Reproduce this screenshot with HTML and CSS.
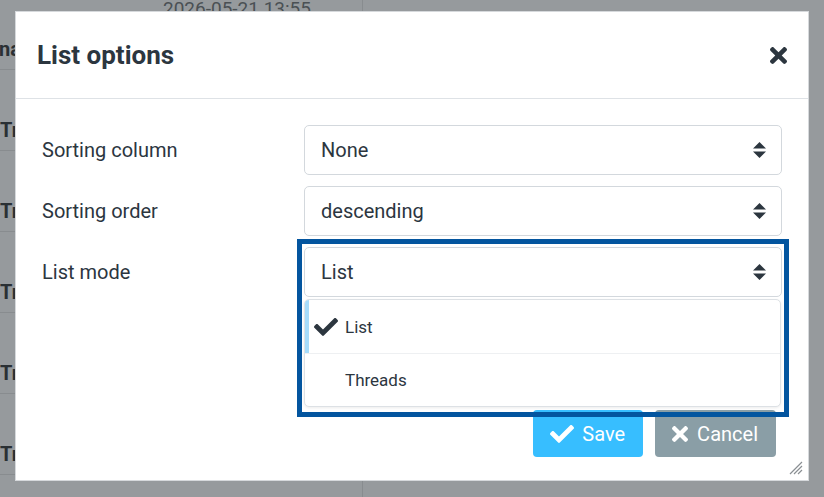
FILE: index.html
```html
<!DOCTYPE html>
<html>
	<head>
		<meta charset="UTF-8">
		<title>List options</title>
		<link rel="stylesheet" href="styles.css">
	</head>
	<body>
		<ul class="list">
			<li><span class="date">2026-05-21 13:55</span><span class="subject first">na</span></li>
			<li><span class="date"></span><span class="subject">Tr</span></li>
			<li><span class="date"></span><span class="subject">Tr</span></li>
			<li><span class="date"></span><span class="subject">Tr</span></li>
			<li><span class="date"></span><span class="subject">Tr</span></li>
			<li><span class="date">2026-05-18 16:32</span><span class="subject">Tr</span></li>
		</ul>

		<div class="dialog">
			<div class="dialog-head">
				<h1>List options</h1>
				<span class="close">
					<svg viewBox="0 80 352 352" width="17" height="17"><path d="M242.72 256l100.07-100.07c12.28-12.28 12.28-32.19 0-44.48l-22.24-22.24c-12.28-12.28-32.19-12.28-44.48 0L176 189.28 75.930 89.21c-12.28-12.28-32.19-12.28-44.48 0L9.21 111.45c-12.28 12.28-12.28 32.19 0 44.48L109.28 256 9.21 356.07c-12.28 12.280-12.28 32.19 0 44.48l22.24 22.24c12.28 12.28 32.2 12.28 44.48 0L176 322.72l100.07 100.07c12.28 12.28 32.2 12.28 44.48 0l22.24-22.24c12.28-12.28 12.28-32.19 0-44.48L242.72 256z"/></svg>
				</span>
			</div>
			<div class="dialog-body">
				<div class="field">
					<label>Sorting column</label>
					<div class="select">None<svg class="arrows" viewBox="0 0 13 16" width="13" height="16"><path d="M0 6.5L6.5 0 13 6.5z M0 9.5h13L6.5 16z"/></svg></div>
				</div>
				<div class="field">
					<label>Sorting order</label>
					<div class="select">descending<svg class="arrows" viewBox="0 0 13 16" width="13" height="16"><path d="M0 6.5L6.5 0 13 6.5z M0 9.5h13L6.5 16z"/></svg></div>
				</div>
				<div class="field">
					<label>List mode</label>
					<div class="select open">List<svg class="arrows" viewBox="0 0 13 16" width="13" height="16"><path d="M0 6.5L6.5 0 13 6.5z M0 9.5h13L6.5 16z"/></svg>
						<div class="ring"></div>
						<ul class="menu">
							<li class="selected">
								<svg class="tick" viewBox="0 66 512 382" width="24" height="18"><path d="M173.9 439.4l-166.4-166.4c-10-10-10-26.2 0-36.2l36.2-36.2c10-10 26.2-10 36.2 0L192 312.7 432.1 72.6c10-10 26.2-10 36.2 0l36.2 36.2c10 10 10 26.2 0 36.2l-294.4 294.4c-10 10-26.2 10-36.2 0z"/></svg>
								List
							</li>
							<li>Threads</li>
						</ul>
					</div>
				</div>
			</div>
			<div class="dialog-foot">
				<span class="btn save">
					<svg viewBox="0 66 512 382" width="24" height="18"><path d="M173.9 439.4l-166.4-166.4c-10-10-10-26.2 0-36.2l36.2-36.2c10-10 26.2-10 36.2 0L192 312.7 432.1 72.6c10-10 26.2-10 36.2 0l36.2 36.2c10 10 10 26.2 0 36.2l-294.4 294.4c-10 10-26.2 10-36.2 0z"/></svg>
					Save
				</span>
				<span class="btn cancel">
					<svg viewBox="0 80 352 352" width="16" height="16"><path d="M242.72 256l100.07-100.07c12.28-12.28 12.28-32.19 0-44.48l-22.24-22.24c-12.28-12.28-32.19-12.28-44.48 0L176 189.28 75.930 89.21c-12.28-12.28-32.19-12.28-44.48 0L9.21 111.45c-12.28 12.28-12.28 32.19 0 44.48L109.28 256 9.21 356.07c-12.28 12.280-12.28 32.19 0 44.48l22.24 22.24c12.28 12.28 32.2 12.28 44.48 0L176 322.72l100.07 100.07c12.28 12.28 32.2 12.28 44.48 0l22.24-22.24c12.28-12.28 12.28-32.19 0-44.48L242.72 256z"/></svg>
					Cancel
				</span>
			</div>
			<svg class="resize" viewBox="0 0 14 14" width="14" height="14"><path d="M13 1L1 13 M13 5L5 13 M13 9L9 13"/></svg>
		</div>
	</body>
</html>
```

FILE: styles.css
```css
html, body{
	margin: 0;
	height: 100%;
	overflow: hidden;
}
body{
	background: #969a9d;
	font-family: Roboto, "Liberation Sans", sans-serif;
	color: #2c363f;
}

/* list behind the overlay */
.list{
	margin: -11px 0 0;
	padding: 0;
	width: 362px;
	border-right: 1px solid #888c8f;
	height: 530px;
}
.list li{
	list-style: none;
	height: 81px;
	border-bottom: 1px solid #888c8f;
	display: flex;
	flex-direction: column;
	padding-top: 8px;
	box-sizing: border-box;
	overflow: hidden;
}
.date{
	height: 24px;
	padding-left: 163px;
	font-size: 19px;
	line-height: 24px;
	color: #4a5054;
	white-space: nowrap;
}
.subject{
	margin-top: 16px;
	width: 15px;
	overflow: hidden;
	font-size: 20px;
	line-height: 24px;
	font-weight: bold;
	color: #2a3034;
	white-space: nowrap;
}
.subject.first{
	text-indent: -1px;
}

/* dialog */
.dialog{
	position: absolute;
	left: 15px;
	top: 11px;
	width: 792px;
	height: 468px;
	background: #fff;
	border: 1px solid #d6d9dc;
	display: flex;
	flex-direction: column;
}
.dialog-head{
	height: 86px;
	border-bottom: 1px solid #dee2e6;
	display: flex;
	align-items: center;
	justify-content: space-between;
	padding: 0 21px;
}
.dialog-head h1{
	margin: 0;
	font-size: 26px;
	font-weight: bold;
	color: #2c363f;
}
.close{
	display: flex;
	fill: #2c363f;
}
.dialog-body{
	flex: 1;
	padding: 26px 26px 0;
	display: flex;
	flex-direction: column;
	gap: 11px;
}
.field{
	display: grid;
	grid-template-columns: 262px 1fr;
	align-items: center;
}
.field label{
	font-size: 20px;
}
.select{
	position: relative;
	height: 50px;
	box-sizing: border-box;
	border: 1px solid #d3d8dd;
	border-radius: 5px;
	padding: 0 15px 0 16px;
	display: flex;
	align-items: center;
	justify-content: space-between;
	font-size: 20px;
}
.arrows{
	fill: #2c363f;
}
.ring{
	position: absolute;
	left: -8px;
	top: -9px;
	width: 482px;
	height: 168px;
	border: 5px solid #03559f;
}
.menu{
	position: absolute;
	left: -1px;
	top: 51px;
	width: 477px;
	height: 108px;
	box-sizing: border-box;
	margin: 0;
	padding: 0;
	background: #fff;
	border: 1px solid #dde1e5;
	border-radius: 5px;
	box-shadow: 0 1px 3px rgba(0,0,0,.08);
	overflow: hidden;
}
.menu li{
	list-style: none;
	height: 53px;
	box-sizing: border-box;
	display: flex;
	align-items: center;
	padding-left: 40px;
	font-size: 17px;
}
.menu li + li{
	border-top: 1px solid #eef0f2;
}
.menu li.selected{
	gap: 7px;
	border-left: 4px solid #a6dcfb;
	padding-left: 5px;
}
.tick{
	fill: #2c363f;
}
.dialog-foot{
	display: flex;
	justify-content: flex-end;
	gap: 12px;
	padding: 0 32px 23px 0;
}
.btn{
	height: 47px;
	border-radius: 4px;
	display: flex;
	align-items: center;
	color: #fff;
	fill: #fff;
	font-size: 20px;
	box-sizing: border-box;
}
.save{
	background: #37beff;
	padding: 0 18px 0 17px;
	gap: 8px;
}
.cancel{
	background: #8a9ea6;
	padding: 0 18px 0 17px;
	gap: 9px;
}
.resize{
	position: absolute;
	right: 5px;
	bottom: 5px;
	stroke: #8a8f93;
	stroke-width: 1.2;
}
```
